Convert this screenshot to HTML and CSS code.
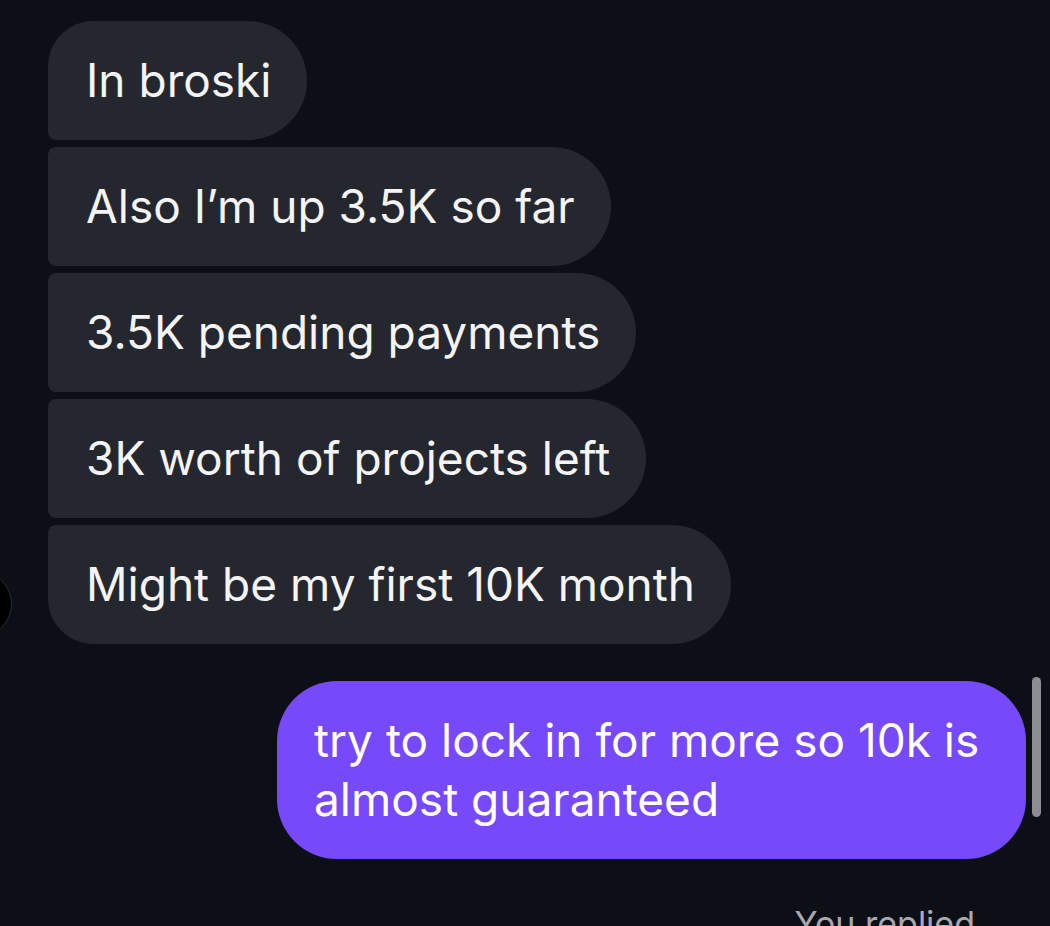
FILE: index.html
```html
<!DOCTYPE html>
<html lang="en">
<head>
    <meta charset="UTF-8">
    <meta name="viewport" content="width=device-width, initial-scale=1.0">
    <title>Chat</title>
    <link rel="stylesheet" href="styles.css">
</head>
<body>
    <div class="thread">
        <div class="incoming">
            <div class="avatar"></div>
            <div class="bubbles">
                <div class="bubble first">In broski</div>
                <div class="bubble">Also I’m up 3.5K so far</div>
                <div class="bubble">3.5K pending payments</div>
                <div class="bubble">3K worth of projects left</div>
                <div class="bubble last">Might be my first 10K month</div>
            </div>
        </div>

        <div class="outgoing">
            <div class="bubble mine">try to lock in for more so 10k is almost guaranteed</div>
        </div>

        <div class="replied">You replied</div>
    </div>

    <div class="scrollbar"></div>
</body>
</html>
```

FILE: styles.css
```css
body {
    margin: 0;
    background: #0d0f16;
    font-family: Inter, "Noto Sans", sans-serif;
    color: #f4f4f6;
    overflow: hidden;
}
.thread {
    display: flex;
    flex-direction: column;
    padding-top: 21px;
}
.incoming {
    display: flex;
    align-items: flex-end;
    gap: 36px;
}
.avatar {
    flex: none;
    width: 64px;
    height: 64px;
    margin-left: -54px;
    margin-bottom: 7px;
    border-radius: 50%;
    background: #000;
    border: 1px solid #2c2d33;
}
.bubbles {
    display: flex;
    flex-direction: column;
    align-items: flex-start;
    gap: 7px;
}
.bubble {
    background: #25272e;
    font-size: 46px;
    line-height: 59px;
    padding: 30px 36px 30px 38px;
    border-radius: 8px 60px 60px 8px;
}
.bubble.first {
    border-top-left-radius: 46px;
}
.bubble.last {
    border-bottom-left-radius: 46px;
}
.outgoing {
    display: flex;
    justify-content: flex-end;
    padding-right: 24px;
    margin-top: 37px;
}
.bubble.mine {
    background: #7649fb;
    color: #fff;
    width: 674px;
    padding: 30px 38px 30px 37px;
    border-radius: 60px;
}
.replied {
    margin-top: 45px;
    padding-right: 75px;
    text-align: right;
    font-size: 34px;
    line-height: 40px;
    color: #a9aab0;
}
.scrollbar {
    position: absolute;
    top: 677px;
    left: 1032px;
    width: 9px;
    height: 140px;
    border-radius: 5px;
    background: #8d8e94;
}
```
